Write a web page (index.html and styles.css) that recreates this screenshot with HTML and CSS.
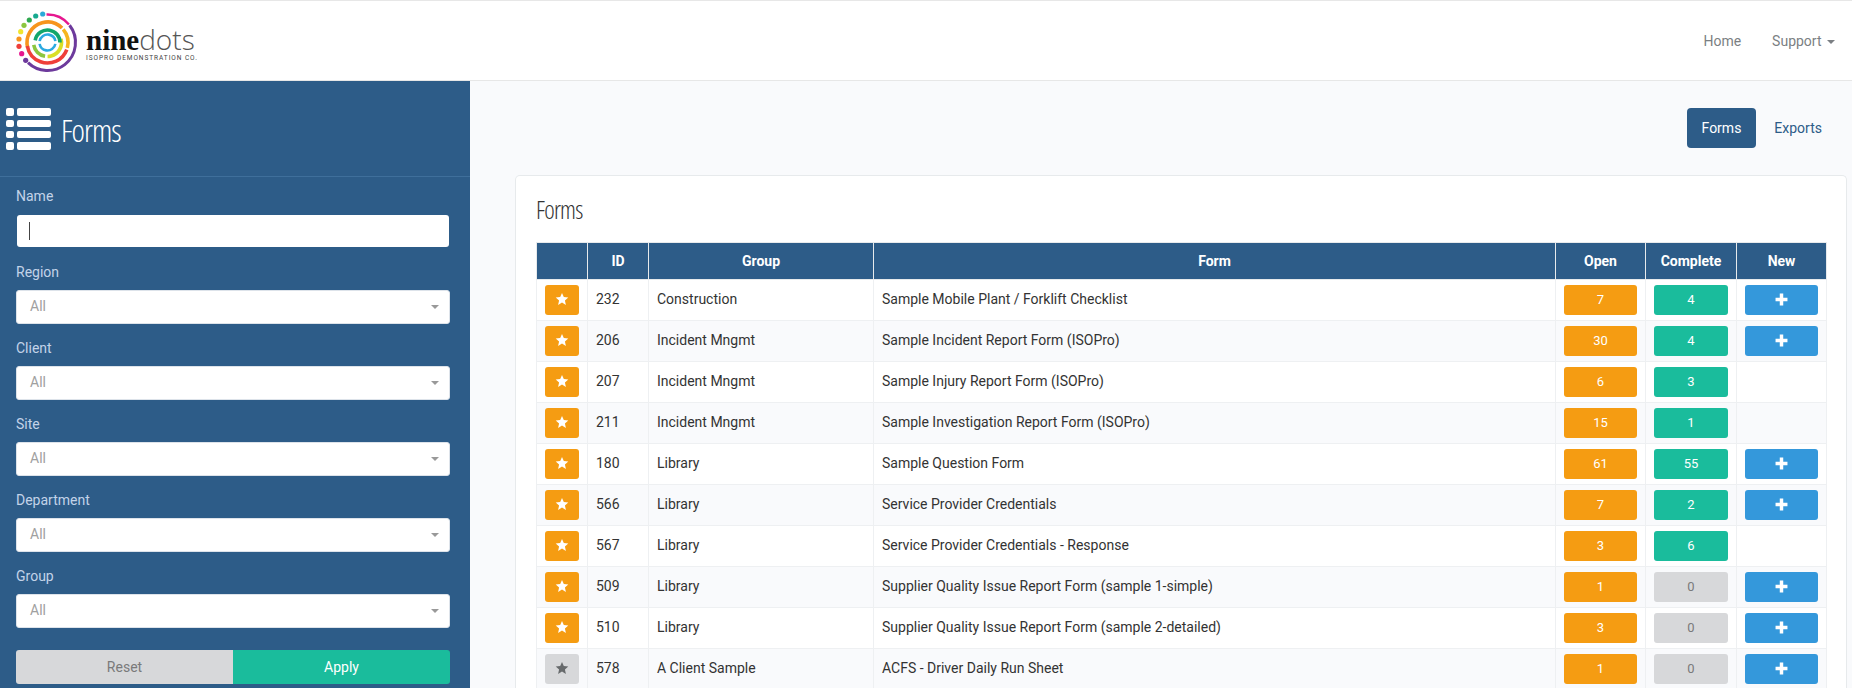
FILE: index.html
```html
<!DOCTYPE html>
<html lang="en">
<head>
    <meta charset="UTF-8">
    <title>Forms</title>
    <link rel="stylesheet" href="styles.css">
</head>
<body>
    <svg class="defs" width="0" height="0">
        <symbol id="star" viewBox="0 0 24 24"><polygon points="12,1.5 15.1,8.6 22.8,9.4 17,14.5 18.7,22.1 12,18.1 5.3,22.1 7,14.5 1.2,9.4 8.9,8.6"/></symbol>
        <symbol id="plus" viewBox="0 0 12 12"><path d="M4.4 0.5h3.2v3.9h3.9v3.2H7.6v3.9H4.4V7.6H0.5V4.4h3.9z"/></symbol>
    </svg>

    <header class="topbar">
        <a class="brand">
            <svg class="logo" viewBox="0 0 66 66" width="66" height="66" fill="none">
                <circle cx="33.5" cy="34.5" r="28" pathLength="360" stroke="#e6178f" stroke-width="2.4" stroke-dasharray="52 308" transform="rotate(-92 33.5 34.5)"/>
                <circle cx="33.5" cy="34.5" r="28" pathLength="360" stroke="#6d3a9c" stroke-width="3" stroke-dasharray="172 188" transform="rotate(-38 33.5 34.5)"/>
                <g stroke-width="3.6">
                    <circle cx="33.5" cy="34.5" r="20.5" pathLength="360" stroke="#f7941d" stroke-dasharray="150 210" transform="rotate(165 33.5 34.5)"/>
                    <circle cx="33.5" cy="34.5" r="20.5" pathLength="360" stroke="#f7b51d" stroke-dasharray="55 305" transform="rotate(-40 33.5 34.5)"/>
                    <circle cx="33.5" cy="34.5" r="20.5" pathLength="360" stroke="#ef3f3a" stroke-dasharray="150 210" transform="rotate(20 33.5 34.5)"/>
                    <circle cx="33.5" cy="34.5" r="14" pathLength="360" stroke="#d9df27" stroke-dasharray="105 255" transform="rotate(-15 33.5 34.5)"/>
                    <circle cx="33.5" cy="34.5" r="14" pathLength="360" stroke="#8cc63f" stroke-dasharray="70 290" transform="rotate(100 33.5 34.5)"/>
                    <circle cx="33.5" cy="34.5" r="12.5" pathLength="360" stroke="#12a66c" stroke-dasharray="170 190" transform="rotate(190 33.5 34.5)"/>
                </g>
                <circle cx="33.5" cy="34.5" r="8" pathLength="360" stroke="#2aa9e0" stroke-width="2.6" stroke-dasharray="160 20" transform="rotate(190 33.5 34.5)"/>
                <circle cx="28.7" cy="6" r="2.6" fill="#2aa9d8"/>
                <circle cx="21.7" cy="8" r="2.6" fill="#17a98f"/>
                <circle cx="15.3" cy="12" r="2.6" fill="#2fa84f"/>
                <circle cx="10" cy="17.3" r="2.6" fill="#8cc63f"/>
                <circle cx="6.7" cy="23.7" r="2.6" fill="#f0e52e"/>
                <circle cx="5" cy="31" r="2.6" fill="#f7941d"/>
                <circle cx="5" cy="38.3" r="2.6" fill="#ef3f3a"/>
                <circle cx="7.7" cy="45.7" r="2.6" fill="#e6178f"/>
                <circle cx="11.7" cy="52.3" r="2.6" fill="#6d3a9c"/>
            </svg>
            <div class="brand-text">
                <div class="brand-name"><b>nine</b><span>dots</span></div>
                <div class="brand-sub">ISOPRO DEMONSTRATION CO.</div>
            </div>
        </a>
        <nav class="topnav">
            <a>Home</a>
            <a>Support <i class="caret"></i></a>
        </nav>
    </header>

    <div class="layout">
        <aside class="sidebar">
            <div class="side-title">
                <svg class="list-icon" viewBox="0 0 45 42" width="45" height="42" fill="#fff">
                    <rect x="0" y="0" width="8" height="8" rx="2"/><rect x="11" y="0" width="34" height="8" rx="2"/>
                    <rect x="0" y="12" width="8" height="7" rx="2"/><rect x="11" y="12" width="34" height="7" rx="2"/>
                    <rect x="0" y="23" width="8" height="7" rx="2"/><rect x="11" y="23" width="34" height="7" rx="2"/>
                    <rect x="0" y="34" width="8" height="8" rx="2"/><rect x="11" y="34" width="34" height="8" rx="2"/>
                </svg>
                <h2>Forms</h2>
            </div>
            <form class="filters">
                <label>Name</label>
                <div class="name-input"><span class="cursor"></span></div>
                <label>Region</label>
                <div class="select">All</div>
                <label>Client</label>
                <div class="select">All</div>
                <label>Site</label>
                <div class="select">All</div>
                <label>Department</label>
                <div class="select">All</div>
                <label>Group</label>
                <div class="select">All</div>
                <div class="filter-btns">
                    <button type="button" class="btn-reset">Reset</button>
                    <button type="button" class="btn-apply">Apply</button>
                </div>
            </form>
        </aside>

        <main class="content">
            <div class="pills">
                <a class="pill active">Forms</a>
                <a class="pill">Exports</a>
            </div>
            <section class="card">
                <h3>Forms</h3>
                <table class="forms-table">
                    <colgroup>
                        <col class="c-star"><col class="c-id"><col class="c-group"><col class="c-form"><col class="c-open"><col class="c-complete"><col class="c-new">
                    </colgroup>
                    <thead>
                        <tr><th></th><th>ID</th><th>Group</th><th>Form</th><th>Open</th><th>Complete</th><th>New</th></tr>
                    </thead>
                    <tbody>
                        <tr>
                            <td><a class="tag orange star"><svg><use href="#star"/></svg></a></td>
                            <td>232</td><td>Construction</td><td>Sample Mobile Plant / Forklift Checklist</td>
                            <td><a class="tag orange">7</a></td><td><a class="tag green">4</a></td>
                            <td><a class="tag blue"><svg><use href="#plus"/></svg></a></td>
                        </tr>
                        <tr>
                            <td><a class="tag orange star"><svg><use href="#star"/></svg></a></td>
                            <td>206</td><td>Incident Mngmt</td><td>Sample Incident Report Form (ISOPro)</td>
                            <td><a class="tag orange">30</a></td><td><a class="tag green">4</a></td>
                            <td><a class="tag blue"><svg><use href="#plus"/></svg></a></td>
                        </tr>
                        <tr>
                            <td><a class="tag orange star"><svg><use href="#star"/></svg></a></td>
                            <td>207</td><td>Incident Mngmt</td><td>Sample Injury Report Form (ISOPro)</td>
                            <td><a class="tag orange">6</a></td><td><a class="tag green">3</a></td>
                            <td></td>
                        </tr>
                        <tr>
                            <td><a class="tag orange star"><svg><use href="#star"/></svg></a></td>
                            <td>211</td><td>Incident Mngmt</td><td>Sample Investigation Report Form (ISOPro)</td>
                            <td><a class="tag orange">15</a></td><td><a class="tag green">1</a></td>
                            <td></td>
                        </tr>
                        <tr>
                            <td><a class="tag orange star"><svg><use href="#star"/></svg></a></td>
                            <td>180</td><td>Library</td><td>Sample Question Form</td>
                            <td><a class="tag orange">61</a></td><td><a class="tag green">55</a></td>
                            <td><a class="tag blue"><svg><use href="#plus"/></svg></a></td>
                        </tr>
                        <tr>
                            <td><a class="tag orange star"><svg><use href="#star"/></svg></a></td>
                            <td>566</td><td>Library</td><td>Service Provider Credentials</td>
                            <td><a class="tag orange">7</a></td><td><a class="tag green">2</a></td>
                            <td><a class="tag blue"><svg><use href="#plus"/></svg></a></td>
                        </tr>
                        <tr>
                            <td><a class="tag orange star"><svg><use href="#star"/></svg></a></td>
                            <td>567</td><td>Library</td><td>Service Provider Credentials - Response</td>
                            <td><a class="tag orange">3</a></td><td><a class="tag green">6</a></td>
                            <td></td>
                        </tr>
                        <tr>
                            <td><a class="tag orange star"><svg><use href="#star"/></svg></a></td>
                            <td>509</td><td>Library</td><td>Supplier Quality Issue Report Form (sample 1-simple)</td>
                            <td><a class="tag orange">1</a></td><td><a class="tag grey">0</a></td>
                            <td><a class="tag blue"><svg><use href="#plus"/></svg></a></td>
                        </tr>
                        <tr>
                            <td><a class="tag orange star"><svg><use href="#star"/></svg></a></td>
                            <td>510</td><td>Library</td><td>Supplier Quality Issue Report Form (sample 2-detailed)</td>
                            <td><a class="tag orange">3</a></td><td><a class="tag grey">0</a></td>
                            <td><a class="tag blue"><svg><use href="#plus"/></svg></a></td>
                        </tr>
                        <tr>
                            <td><a class="tag grey star"><svg><use href="#star"/></svg></a></td>
                            <td>578</td><td>A Client Sample</td><td>ACFS - Driver Daily Run Sheet</td>
                            <td><a class="tag orange">1</a></td><td><a class="tag grey">0</a></td>
                            <td><a class="tag blue"><svg><use href="#plus"/></svg></a></td>
                        </tr>
                    </tbody>
                </table>
            </section>
        </main>
    </div>
</body>
</html>
```

FILE: styles.css
```css
html, body {
    height: 688px;
    overflow: hidden;
}

body {
    margin: 0;
    font-family: Roboto, 'Liberation Sans', sans-serif;
    font-size: 14px;
    color: #333;
    background-color: #f9fafc;
    display: flex;
    flex-direction: column;
}

.defs {
    display: none;
}

a {
    text-decoration: none;
}

/* top bar */
.topbar {
    height: 81px;
    box-sizing: border-box;
    flex: none;
    display: flex;
    justify-content: space-between;
    align-items: center;
    background-color: #fff;
    border-top: 1px solid #e7e7e7;
    border-bottom: 1px solid #e7e7e7;
}

.brand {
    display: flex;
    align-items: center;
    margin-left: 14px;
}

.logo {
    margin-right: 6px;
}

.brand-text {
    margin-top: 4px;
}

.brand-name {
    height: 28px;
    line-height: 31px;
    color: #111;
    white-space: nowrap;
}

.brand-name b {
    font-family: 'Liberation Serif', serif;
    font-weight: bold;
    font-size: 29px;
}

.brand-name span {
    font-family: 'Open Sans', sans-serif;
    font-weight: 300;
    font-size: 28px;
    color: #555;
}

.brand-sub {
    font-size: 6.5px;
    line-height: 8px;
    margin-top: 2px;
    letter-spacing: 0.95px;
    color: #444;
    white-space: nowrap;
}

.topnav {
    display: flex;
    gap: 31px;
    margin-right: 17px;
    color: #7b7f83;
}

.caret {
    display: inline-block;
    margin-left: 2px;
    vertical-align: middle;
    border-top: 4px solid #7b7f83;
    border-left: 4px solid transparent;
    border-right: 4px solid transparent;
}

/* main layout */
.layout {
    flex: 1;
    display: flex;
    min-height: 0;
}

.sidebar {
    width: 470px;
    flex: none;
    background-color: #2d5c88;
}

.side-title {
    height: 96px;
    box-sizing: border-box;
    display: flex;
    align-items: center;
    padding: 1px 0 0 6px;
    border-bottom: 1px solid #3f6f9b;
}

.list-icon {
    margin-right: 10px;
}

.side-title h2 {
    margin: 0;
    font-family: 'Open Sans', sans-serif;
    font-stretch: condensed;
    font-weight: 300;
    font-size: 32px;
    letter-spacing: -1px;
    color: #fff;
}

.filters {
    padding: 10px 20px 0 16px;
}

.filters label {
    display: block;
    height: 19px;
    line-height: 19px;
    margin-bottom: 8px;
    color: #c3d3e8;
}

.name-input {
    height: 32px;
    margin: 9px 1px 16px;
    display: flex;
    align-items: center;
    background-color: #fff;
    border-radius: 3px;
    padding-left: 12px;
}

.cursor {
    width: 1px;
    height: 18px;
    background-color: #444;
}

.select {
    height: 34px;
    line-height: 31px;
    box-sizing: border-box;
    margin-bottom: 15px;
    padding-left: 13px;
    color: #a0a0a0;
    background-color: #fff;
    border: 1px solid #dde3ea;
    border-radius: 3px;
    position: relative;
}

/* dropdown arrow */
.select::after {
    content: '';
    position: absolute;
    right: 10px;
    top: 14px;
    border-top: 4px solid #999;
    border-left: 4px solid transparent;
    border-right: 4px solid transparent;
}

.filter-btns {
    display: flex;
    height: 34px;
    margin-top: 22px;
}

.filter-btns button {
    flex: 1;
    border: none;
    font-family: inherit;
    font-size: 14px;
    cursor: pointer;
}

.btn-reset {
    background-color: #d7d8da;
    color: #7a7a7a;
    border-radius: 3px 0 0 3px;
}

.btn-apply {
    background-color: #1abc9c;
    color: #fff;
    border-radius: 0 3px 3px 0;
}

/* content */
.content {
    flex: 1;
    min-width: 0;
    padding: 27px 5px 0 45px;
}

.pills {
    display: flex;
    justify-content: flex-end;
    height: 40px;
    margin-bottom: 27px;
    padding-right: 10px;
}

.pill {
    line-height: 40px;
    padding: 0 15px;
    margin-left: 3px;
    border-radius: 4px;
    color: #2d5c88;
}

.pill.active {
    background-color: #2d5c88;
    color: #fff;
}

.card {
    background-color: #fff;
    border: 1px solid #e7eaec;
    border-bottom: none;
    border-radius: 5px 5px 0 0;
    padding: 17px 19px 0 20px;
}

.card h3 {
    margin: 0 0 17px;
    height: 32px;
    line-height: 32px;
    font-family: 'Open Sans', sans-serif;
    font-stretch: condensed;
    font-weight: 300;
    font-size: 25px;
    letter-spacing: -0.8px;
    color: #333;
}

.forms-table {
    width: 1290px;
    table-layout: fixed;
    border-collapse: collapse;
}

.c-star { width: 51px; }
.c-id { width: 61px; }
.c-group { width: 225px; }
.c-form { width: 682px; }
.c-open { width: 90px; }
.c-complete { width: 91px; }
.c-new { width: 90px; }

.forms-table th {
    height: 36px;
    padding: 0;
    background-color: #2d5c88;
    border: 1px solid #e7eaec;
    color: #fff;
    font-weight: bold;
    text-align: center;
}

.forms-table td {
    height: 38px;
    padding: 0 8px 2px;
    border: 1px solid #eef0f2;
}

.forms-table tbody tr:nth-child(even) {
    background-color: #f9fafc;
}

.tag {
    display: block;
    height: 30px;
    line-height: 30px;
    margin-bottom: -2px;
    border-radius: 3px;
    text-align: center;
    font-size: 13px;
    color: #fff;
}

.tag svg {
    width: 13px;
    height: 13px;
    fill: #fff;
    vertical-align: -2px;
}

.star svg {
    width: 14px;
    height: 14px;
}

.orange { background-color: #f59c12; }
.green { background-color: #1abc9c; }
.blue { background-color: #3498db; }
.grey { background-color: #d7d8da; color: #7a7a7a; }
.grey svg { fill: #676a6c; }
```
